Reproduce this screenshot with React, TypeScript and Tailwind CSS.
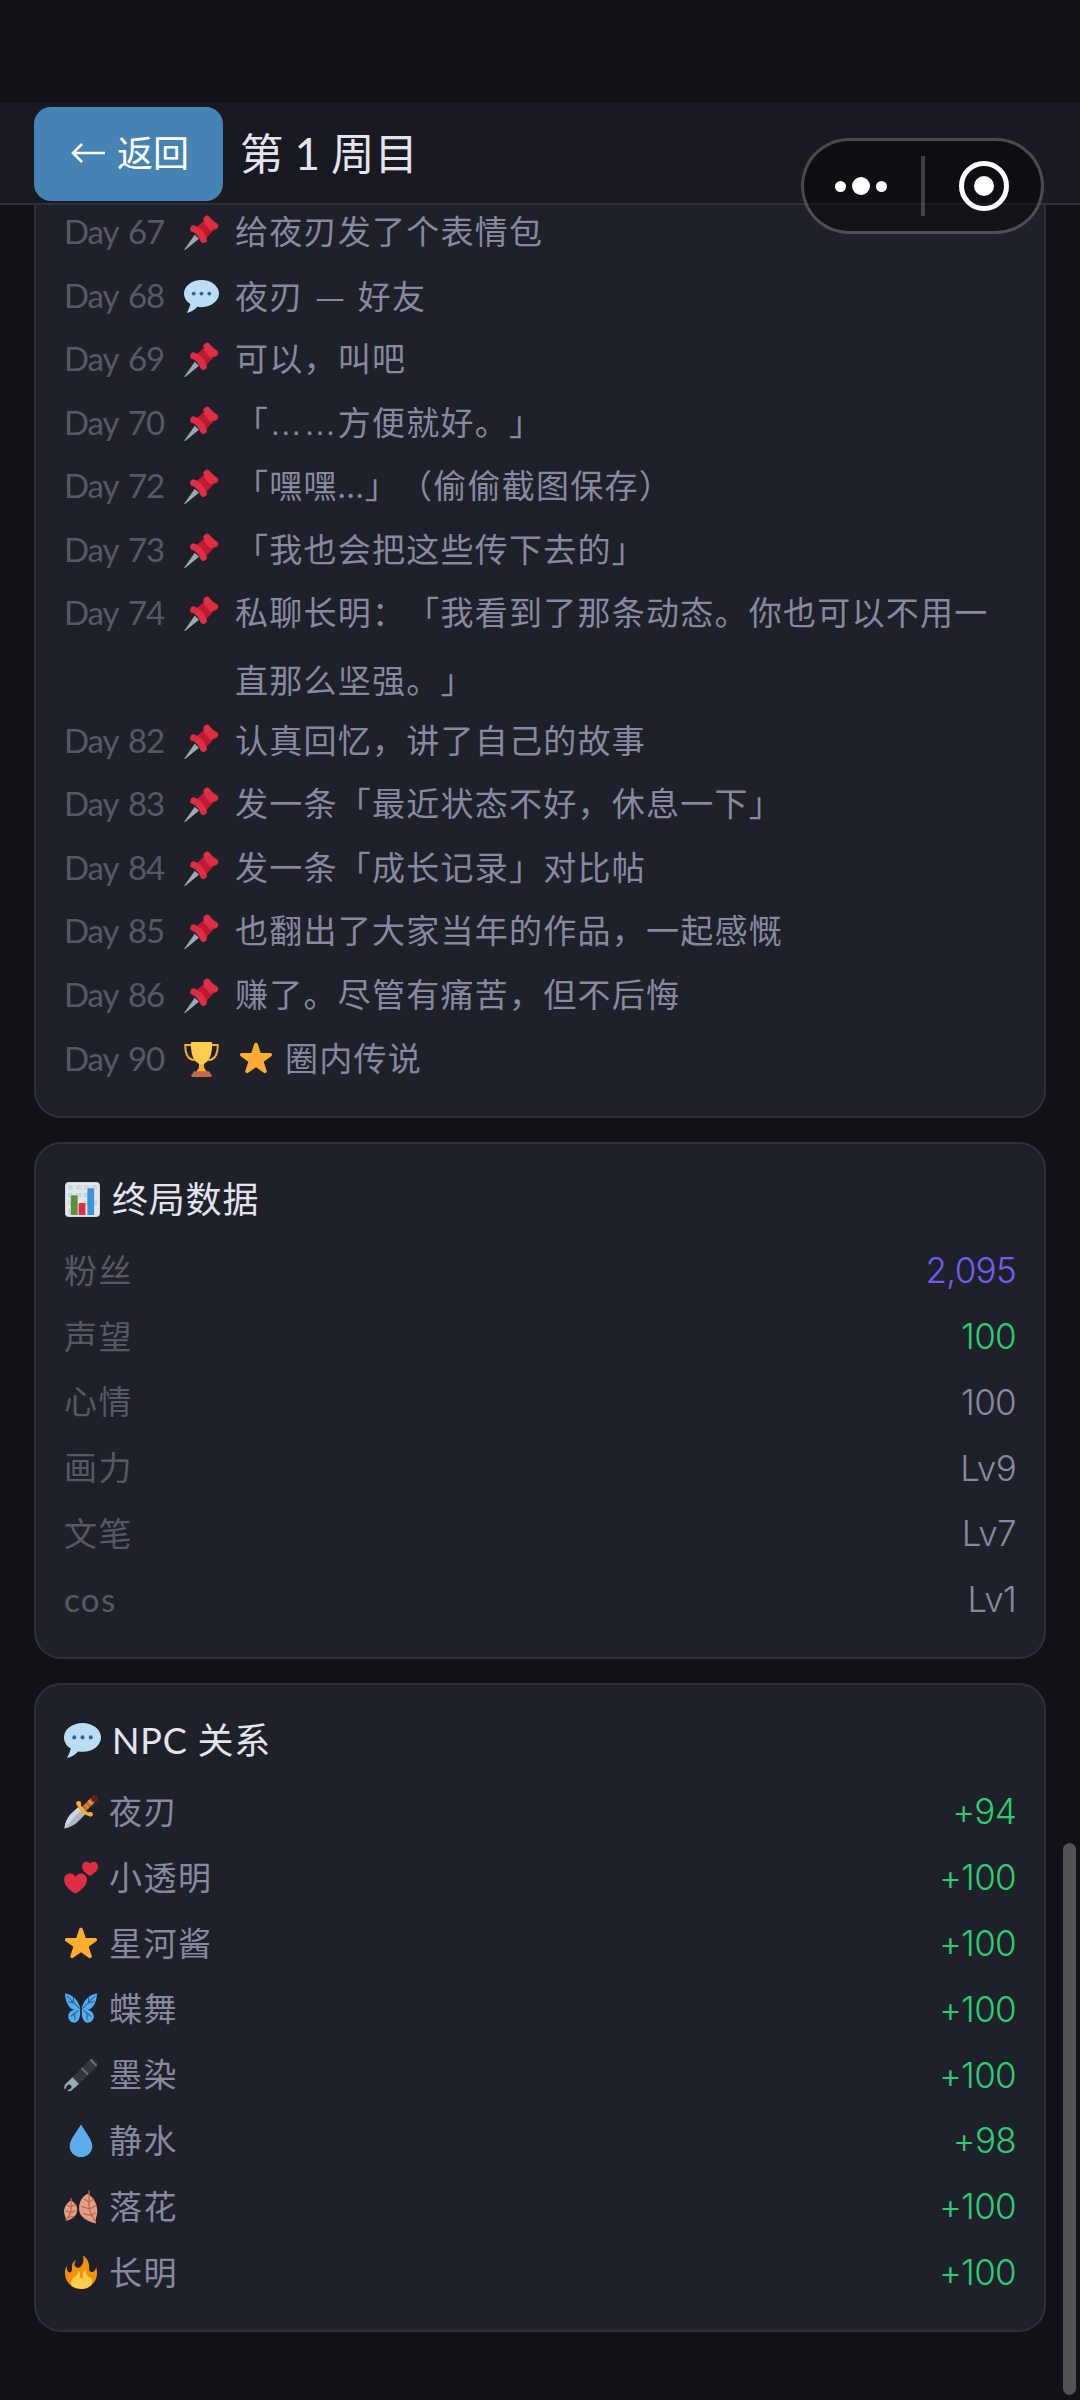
import type { ReactNode } from "react";
import clsx from "clsx";

type IconName =
  | "pin"
  | "bubble"
  | "trophy"
  | "star"
  | "chart"
  | "dagger"
  | "hearts"
  | "butterfly"
  | "pen"
  | "drop"
  | "leaves"
  | "fire";

const STAR =
  "M18 1.8c.85 0 1.6.55 1.87 1.35l3.1 9.5 10.1.02c.84.01 1.58.55 1.84 1.35.26.8-.03 1.67-.72 2.15l-8.1 5.7 3.2 9.7c.27.8-.02 1.66-.7 2.15-.68.5-1.6.5-2.27 0L18 27.9l-8.32 5.82c-.68.5-1.58.5-2.26 0-.68-.5-.97-1.36-.7-2.15l3.2-9.7-8.1-5.7c-.7-.48-.98-1.35-.72-2.15.26-.8 1-1.34 1.84-1.35l10.1-.02 3.1-9.5C16.4 2.35 17.15 1.8 18 1.8z";

const icons: Record<IconName, ReactNode> = {
  pin: (
    <>
      <path fill="#99AAB5" d="M.4 35.4 11 20.4l4.4 4L1.2 35.9c-.5.4-1.1 0-.8-.5z" />
      <path fill="#BE1931" d="m11.5 14 11-10 9.5 10-10 11z" />
      <path fill="#DD2E44" d="m20 8 7.5 8.5 6-4.5L24 3z" />
      <path stroke="#DD2E44" strokeWidth="7" strokeLinecap="round" d="m23.6 4.4.2-.2M24 4.8c2 2.5 5 5 7.6 6.4" />
      <path stroke="#DD2E44" strokeWidth="7" strokeLinecap="round" fill="none" d="M9.8 14.2c3.8 1 8.6 5.8 10.2 11" />
    </>
  ),
  bubble: (
    <>
      <path
        fill="#BDDDF4"
        d="M18 1C8.059 1 0 7.268 0 15c0 4.368 2.574 8.268 6.604 10.835C6.08 28.144 4.859 31.569 2.9 35c4.6-.96 8.539-3.761 10.816-6.416 1.376.262 2.805.416 4.284.416 9.941 0 18-6.268 18-14S27.941 1 18 1z"
      />
      <circle fill="#2A6797" cx="10" cy="15" r="2" />
      <circle fill="#2A6797" cx="18" cy="15" r="2" />
      <circle fill="#2A6797" cx="26" cy="15" r="2" />
    </>
  ),
  trophy: (
    <>
      <path stroke="#FFAC33" strokeWidth="2" fill="none" d="M9 3H1.3C1 10 3 18.5 11 18.5M27 3h7.7C35 10 33 18.5 25 18.5" />
      <path fill="#FFCC4D" d="M7 1.4C7 .6 7.6 0 8.4 0h19.2c.8 0 1.4.6 1.4 1.4C29 12 26.5 20 20.5 22.5V26c0 2 2.5 3 2.5 5H13c0-2 2.5-3 2.5-5v-3.5C9.5 20 7 12 7 1.4z" />
      <path fill="#FFAC33" d="M15.5 23.5h5V26c0 2 2.5 3 2.5 5H13c0-2 2.5-3 2.5-5z" />
      <path fill="#C1694F" d="M11 30h14c1.5 0 2 1.5 2 3H9c0-1.5.5-3 2-3z" />
      <rect fill="#C1694F" x="7.5" y="33" width="21" height="3" rx="1.2" />
    </>
  ),
  star: <path fill="#FFAC33" d={STAR} />,
  chart: (
    <>
      <rect fill="#CCD6DD" width="36" height="36" rx="4" />
      <rect fill="#E1E8ED" x="1" y="1" width="34" height="34" rx="3" />
      <path fill="#CCD6DD" d="M3 3h5v5H3zM11 3h6v5h-6zM19 3h6v5h-6zM28 3h5v5h-5zM3 11h5v5H3zM11 11h6v5h-6zM19 11h6v5h-6zM3 19h5v5H3zM19 19h6v5h-6zM28 19h5v5h-5zM3 27h5v6H3z" />
      <path fill="#5C913B" d="M13 34H6V15a1.5 1.5 0 0 1 1.5-1.5h4A1.5 1.5 0 0 1 13 15z" />
      <path fill="#DD2E44" d="M21 34h-7V23a1.5 1.5 0 0 1 1.5-1.5h4A1.5 1.5 0 0 1 21 23z" />
      <path fill="#3B94D9" d="M30 34h-7V8a1.5 1.5 0 0 1 1.5-1.5h4A1.5 1.5 0 0 1 30 8z" />
    </>
  ),
  dagger: (
    <>
      <path fill="#AAB8C2" d="M.5 35.5C1 30 3 25 7 20.5l8-7.5 7.5 7.5-8 8C10 32.5 5.5 34.5.5 35.5z" />
      <path fill="#CCD6DD" d="M.5 35.5C1 30 3 25 7 20.5l8-7.5 3 3z" />
      <path stroke="#BF6952" strokeWidth="6" d="M20 16 31 5" />
      <path stroke="#F4900C" strokeWidth="6" d="m27 9 2-2M23.5 12.5l1-1" />
      <circle fill="#662113" cx="32.5" cy="3.8" r="3.6" />
      <path stroke="#FFAC33" strokeWidth="3.6" strokeLinecap="round" fill="none" d="M15.5 9c.5 4 7 11.5 12.5 11.5" />
      <circle fill="#FFAC33" cx="15.5" cy="9" r="2.6" />
      <circle fill="#FFAC33" cx="28" cy="20.5" r="2.6" />
    </>
  ),
  hearts: (
    <>
      <path fill="#DD2E44" d="M24.3 19.7c0-3.7-2.8-6.5-6.3-6.5-2.4 0-4.6 1.4-5.7 3.5-1.1-2.1-3.3-3.5-5.8-3.5-3.5 0-6.4 2.8-6.4 6.5C0 26.5 6.5 31.5 12.2 34.8c5.7-3.3 12.1-8.3 12.1-15.1z" />
      <path fill="#DD2E44" d="M36 5.9C36 3 34 .8 31.5.8c-1.6 0-3 .9-3.8 2.2A4.4 4.4 0 0 0 24 .8c-2.6 0-4.8 2.2-4.8 5.1 0 4.5 4.2 7.7 8.3 10 4.2-2.3 8.5-5.5 8.5-10z" />
    </>
  ),
  butterfly: (
    <>
      <path fill="#55ACEE" d="M1 1.5c5 .3 13 4.5 16 14.5l-1 3C9 20.5 2 16 1 1.5zM35 1.5c-5 .3-13 4.5-16 14.5l1 3C27 20.5 34 16 35 1.5z" />
      <path fill="#55ACEE" d="M16.5 18C9 18 4.5 21 4.5 26c0 4 3 6.5 6.5 6.5 4 0 6.5-5 6.5-14zM19.5 18c7.5 0 12 3 12 8 0 4-3 6.5-6.5 6.5-4 0-6.5-5-6.5-14z" />
      <path stroke="#226699" strokeWidth="1.2" fill="none" d="m3 4 13 13M33 4 20 17M4 10l6 1.5M32 10l-6 1.5M10 5v6M26 5v6M15.5 19.5 7 26M20.5 19.5 29 26M11.5 23v7M24.5 23v7" />
      <path stroke="#292F33" strokeWidth="1.6" strokeLinecap="round" d="M18 15v8" />
    </>
  ),
  pen: (
    <>
      <path fill="#31373D" d="M9 20.5 27.5 1.5c1.5-1.5 3.5-1.5 5 0L35 4c1.3 1.5 1.3 3.5 0 5L15.5 27.5z" />
      <path stroke="#66757F" strokeWidth="1.8" d="m18.5 10.5 7 7M28 1.8l6.5 6.5" />
      <path fill="#99AAB5" d="m9 20.5 6.8 7L8.5 34c-1.5 1.2-3.5 1.5-5 1 .5-1 1.8-1 2.3-1.8a2.6 2.6 0 1 0-3-3C2 31.2 2.2 32.5.7 33.500c-.8-2-.2-4.500.8-6z" />
    </>
  ),
  drop: <path fill="#5DADEC" d="M30 23.2C30 30 24.6 35 18 35S6 30 6 23.2C6 16.5 15 6 17.3 1.5c.3-.6 1.1-.6 1.4 0C21 6 30 16.5 30 23.2z" />,
  leaves: (
    <>
      <path fill="#E39F85" d="M25 4c-6 3-9 9-9 15.5 0 8 6 13 18 16-1-3-.5-5 .5-8C37 19 33 9 25 4z" />
      <path fill="#E39F85" d="M7.5 11C3 13 0 18.5 0 23c0 3.500 2.500 6 2 9.500C8 32 14 27.500 14 21c0-4.500-2.500-8-6.500-10z" />
      <path stroke="#C1694F" strokeWidth="1.4" strokeLinecap="round" fill="none" d="M26.5.8V17c.5 6 3.500 12 6.500 16M26.500 13l-5-3.500M26.500 13l5-3.500M27 20l-8-2.500M27 20l7-3.500M29 27l-8-2M29 27l4-3M7.500 9v10c0 5-2 9-5 12M7.500 18 3 16M7.500 18l4-2.500M7 24l-5-2M7 24l5-2M5 29l5-1" />
    </>
  ),
  fire: (
    <>
      <path fill="#F4900C" d="M35 19a16.9 16.9 0 0 0-1-6c-.5 3-2.5 5-4.5 5-4.500 0-2-6-3.500-10-1-3-3-6-6-7.500 1.500 4 .5 8-1.500 10.500 0 0-1 2.500-4 2.500s-5-4-1.500-8C8 7.500 8.500 12 8.500 14c0 2.500-.5 4.500-2.500 4.500S2.500 15 3.200 11.500C1.500 14 1 17 1 19c0 9.400 7.600 17 17 17s17-7.600 17-17z" />
      <path fill="#FFCC4D" d="M28.4 23.7c-3.400-.3-5.600-2-4.900-8.200-2.500 1-4.500 4-3.500 7 .4 1.500-.5 2.200-1.300 2.200-1.300 0-2-1.300-1.700-3.200.4-2.300-1-4-2.200-4.500.5 2.500-2 4.500-4 6.500C9 25.500 7.500 27 7.500 30c0 1.200.3 2 .7 2.800A16.900 16.900 0 0 0 18 36c4 0 7.500-1.300 10.500-3.600 1.800-3 1.700-6.700-.1-8.700z" />
    </>
  ),
};

function Icon({ name, className }: { name: IconName; className?: string }) {
  return (
    <svg viewBox="0 0 36 36" fill="none" className={clsx("shrink-0", className)} aria-hidden="true">
      {icons[name]}
    </svg>
  );
}

interface LogEntry {
  day: number;
  icon: IconName;
  text: ReactNode;
}

const log: LogEntry[] = [
  { day: 67, icon: "pin", text: "给夜刃发了个表情包" },
  {
    day: 68,
    icon: "bubble",
    text: (
      <span className="[word-spacing:2px]">
        夜刃 <span className="font-['Noto_Sans_CJK_SC',sans-serif]">—</span> 好友
      </span>
    ),
  },
  { day: 69, icon: "pin", text: "可以，叫吧" },
  {
    day: 70,
    icon: "pin",
    text: (
      <>
        「<span className="font-['Liberation_Sans',sans-serif]">……</span>方便就好。」
      </>
    ),
  },
  { day: 72, icon: "pin", text: "「嘿嘿...」（偷偷截图保存）" },
  { day: 73, icon: "pin", text: "「我也会把这些传下去的」" },
  { day: 74, icon: "pin", text: "私聊长明：「我看到了那条动态。你也可以不用一直那么坚强。」" },
  { day: 82, icon: "pin", text: "认真回忆，讲了自己的故事" },
  { day: 83, icon: "pin", text: "发一条「最近状态不好，休息一下」" },
  { day: 84, icon: "pin", text: "发一条「成长记录」对比帖" },
  { day: 85, icon: "pin", text: "也翻出了大家当年的作品，一起感慨" },
  { day: 86, icon: "pin", text: "赚了。尽管有痛苦，但不后悔" },
  {
    day: 90,
    icon: "trophy",
    text: (
      <span className="flex items-center gap-[12px]">
        <Icon name="star" className="ml-[4px] size-[34px]" />
        圈内传说
      </span>
    ),
  },
];

const stats = [
  { label: "粉丝", value: "2,095", color: "text-[#755cf0]" },
  { label: "声望", value: "100", color: "text-[#2ecc71]" },
  { label: "心情", value: "100", color: "text-[#8888a0]" },
  { label: "画力", value: "Lv9", color: "text-[#8888a0]" },
  { label: "文笔", value: "Lv7", color: "text-[#8888a0]" },
  { label: "cos", value: "Lv1", color: "text-[#8888a0]" },
];

const npcs: { icon: IconName; name: string; value: string }[] = [
  { icon: "dagger", name: "夜刃", value: "+94" },
  { icon: "hearts", name: "小透明", value: "+100" },
  { icon: "star", name: "星河酱", value: "+100" },
  { icon: "butterfly", name: "蝶舞", value: "+100" },
  { icon: "pen", name: "墨染", value: "+100" },
  { icon: "drop", name: "静水", value: "+98" },
  { icon: "leaves", name: "落花", value: "+100" },
  { icon: "fire", name: "长明", value: "+100" },
];

function LogRow({ day, icon, text }: LogEntry) {
  return (
    <li className="flex min-h-[63.55px] items-start">
      <span className="w-[120px] shrink-0 text-[33px] leading-[63.5px] tracking-[-1.1px] text-[#575866] [word-spacing:3px]">
        Day {day}
      </span>
      <Icon name={icon} className="mt-[15px] size-[35px]" />
      <span className="-mt-[2px] -mb-[5.5px] ml-[16px] flex-1 pr-[8px] text-[33px] leading-[67.5px] tracking-[1.25px] text-[#8888a0]">
        {text}
      </span>
    </li>
  );
}

function Card({ icon, title, children }: { icon: IconName; title: string; children: ReactNode }) {
  return (
    <section className="mt-6 rounded-[27px] border-2 border-[#2d2f39] bg-[#1e212a] px-[28px] pt-[28px] pb-[25px]">
      <h2 className="mb-[11.5px] flex h-[54px] items-center gap-[11px] text-[36px] tracking-[0.8px] text-[#e4e4ef]">
        <Icon name={icon} className={icon === "chart" ? "mx-px size-[35px]" : "size-[37px]"} />
        {title}
      </h2>
      {children}
    </section>
  );
}

function ValueRow({ label, value, color }: { label: ReactNode; value: string; color: string }) {
  return (
    <div className="flex h-[65.8px] items-center justify-between">
      {label}
      <span className={clsx("font-['Inter',sans-serif] text-[35px] font-[350] tracking-[-0.7px]", color)}>{value}</span>
    </div>
  );
}

// Mini-program menu capsule floating over the page
function Capsule() {
  return (
    <div className="absolute top-[138px] left-[801px] z-20 flex h-[96px] w-[243px] items-center rounded-full border-[3px] border-white/25 bg-black/40">
      <div className="flex flex-1 items-center justify-center gap-[6px] pr-[3px]">
        <i className="size-[11px] rounded-full bg-white" />
        <i className="size-[18px] rounded-full bg-white" />
        <i className="size-[11px] rounded-full bg-white" />
      </div>
      <div className="h-[60px] w-[4px] bg-white/20" />
      <div className="flex flex-1 items-center justify-center pl-[2px]">
        <div className="flex size-[50px] items-center justify-center rounded-full border-[5px] border-white">
          <i className="size-[20px] rounded-full bg-white" />
        </div>
      </div>
    </div>
  );
}

export default function App() {
  return (
    <div className="relative h-[2400px] w-[1080px] overflow-hidden bg-[#121117] pt-[103px] font-['Lato','Noto_Sans_CJK_SC',sans-serif] [text-spacing-trim:space-all]">
      <header className="relative z-10 flex h-[102px] items-start border-b-2 border-[#2d2f39] bg-[#191921] pt-[4px] pl-[34px]">
        <button className="flex h-[94px] w-[189px] items-center justify-center gap-[12px] rounded-[17px] bg-[#4682b4] pb-[2px] pl-[3px] text-[36px] text-white">
          <svg viewBox="0 0 34 20" className="h-[20px] w-[34px]" fill="none" stroke="currentColor" strokeWidth="2.6">
            <path d="M34 10H2M11 1 2 10l9 9" />
          </svg>
          返回
        </button>
        <h1 className="ml-[17px] text-[43.5px] leading-[93px] text-[#e4e4ef]">第 1 周目</h1>
      </header>

      <main className="px-[34px]">
        <section className="-mt-[5px] rounded-b-[27px] border-2 border-t-0 border-[#2d2f39] bg-[#1e212a] px-[28px] pb-[26px]">
          <ul>
            {log.map((entry) => (
              <LogRow key={entry.day} {...entry} />
            ))}
          </ul>
        </section>

        <Card icon="chart" title="终局数据">
          {stats.map(({ label, value, color }) => (
            <ValueRow
              key={label}
              label={<span className="text-[33px] tracking-[1.4px] text-[#575866]">{label}</span>}
              value={value}
              color={color}
            />
          ))}
        </Card>

        <Card icon="bubble" title="NPC 关系">
          {npcs.map(({ icon, name, value }) => (
            <ValueRow
              key={name}
              label={
                <span className="flex items-center gap-[11px] text-[33px] tracking-[1.5px] text-[#8888a0]">
                  <Icon name={icon} className="size-[34px]" />
                  {name}
                </span>
              }
              value={value}
              color="text-[#2ecc71]"
            />
          ))}
        </Card>
      </main>

      <Capsule />
      <div className="absolute top-[1843px] right-[4px] h-[552px] w-[13px] rounded-full bg-[#535353]" />
    </div>
  );
}
